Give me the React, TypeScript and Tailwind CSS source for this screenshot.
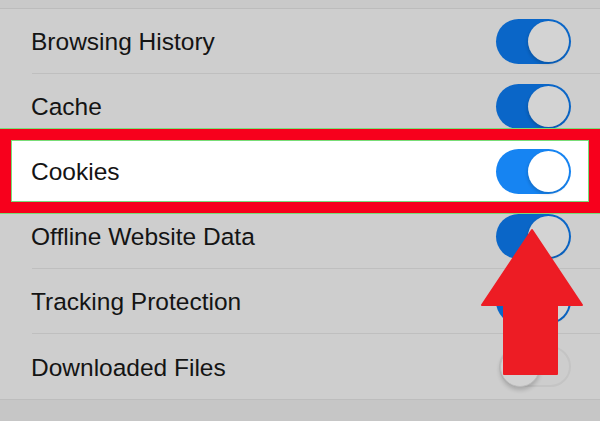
import React from "react";

type Row = { label: string; state: "dim" | "active" | "off" };

const rows: Row[] = [
  { label: "Browsing History", state: "dim" },
  { label: "Cache", state: "dim" },
  { label: "Cookies", state: "active" },
  { label: "Offline Website Data", state: "dim" },
  { label: "Tracking Protection", state: "dim" },
  { label: "Downloaded Files", state: "off" },
];

function Toggle({ state }: { state: Row["state"] }) {
  if (state === "off") {
    return (
      <div className="relative h-[41px] w-[72px] rounded-full border-2 border-[#c4c4c4] bg-[#cdcdcd]">
        <div className="absolute -left-[1px] -top-[1px] h-[40px] w-[40px] rounded-full border border-[#bdbdbd] bg-[#d2d2d2] shadow-[0_3px_4px_rgba(0,0,0,0.18)]" />
      </div>
    );
  }
  const active = state === "active";
  return (
    <div
      className={
        active
          ? "flex h-[45px] w-[75px] items-center justify-end rounded-full bg-[#1684f2] pr-[2px]"
          : "flex h-[45px] w-[75px] items-center justify-end rounded-full bg-[#0a66c8] pr-[2px]"
      }
    >
      <div
        className={
          active
            ? "h-[41px] w-[41px] rounded-full bg-white shadow-[-1px_2px_3px_rgba(0,0,0,0.15)]"
            : "h-[41px] w-[41px] rounded-full bg-[#d3d3d3] shadow-[-1px_2px_3px_rgba(0,0,0,0.15)]"
        }
      />
    </div>
  );
}

export default function App() {
  return (
    <div
      className="relative h-[421px] w-[600px] overflow-hidden bg-[#c6c6c6]"
      style={{ fontFamily: '"Liberation Sans", Arial, sans-serif' }}
    >
      <div className="h-[9px] border-b border-[#bcbcbc] bg-[#c9c9c9]" />
      <div className="border-b border-[#bdbdbd] bg-[#cecece] pl-[32px]">
        {rows.map((row, i) => (
          <div
            key={row.label}
            className={
              (row.state === "active" ? "-ml-[32px] bg-white pl-[32px] " : "") +
              (i < rows.length - 1 ? "border-b border-[#bfbfbf] " : "") +
              "flex h-[65px] items-center justify-between pr-[29px]"
            }
          >
            <span className="-ml-[1px] pt-[3px] text-[24.5px] leading-none text-[#141414]">
              {row.label}
            </span>
            <Toggle state={row.state} />
          </div>
        ))}
      </div>

      {/* red highlight frame */}
      <div className="absolute left-0 right-0 top-[128px] h-[86px] border-t border-b border-[#78dd78]">
        <div className="h-full w-full border-[11px] border-[#f7001c]">
          <div className="h-full w-full border border-[#78dd78]" />
        </div>
      </div>

      {/* arrow */}
      <svg
        className="absolute left-0 top-0"
        width={600}
        height={421}
        viewBox="0 0 600 421"
      >
        <polygon
          points="532,230 482,305 504,305 504,374 557,374 557,305 582,305"
          fill="#ed1c24"
          stroke="#ed1c24"
          strokeWidth={2}
          strokeLinejoin="round"
        />
      </svg>
    </div>
  );
}
